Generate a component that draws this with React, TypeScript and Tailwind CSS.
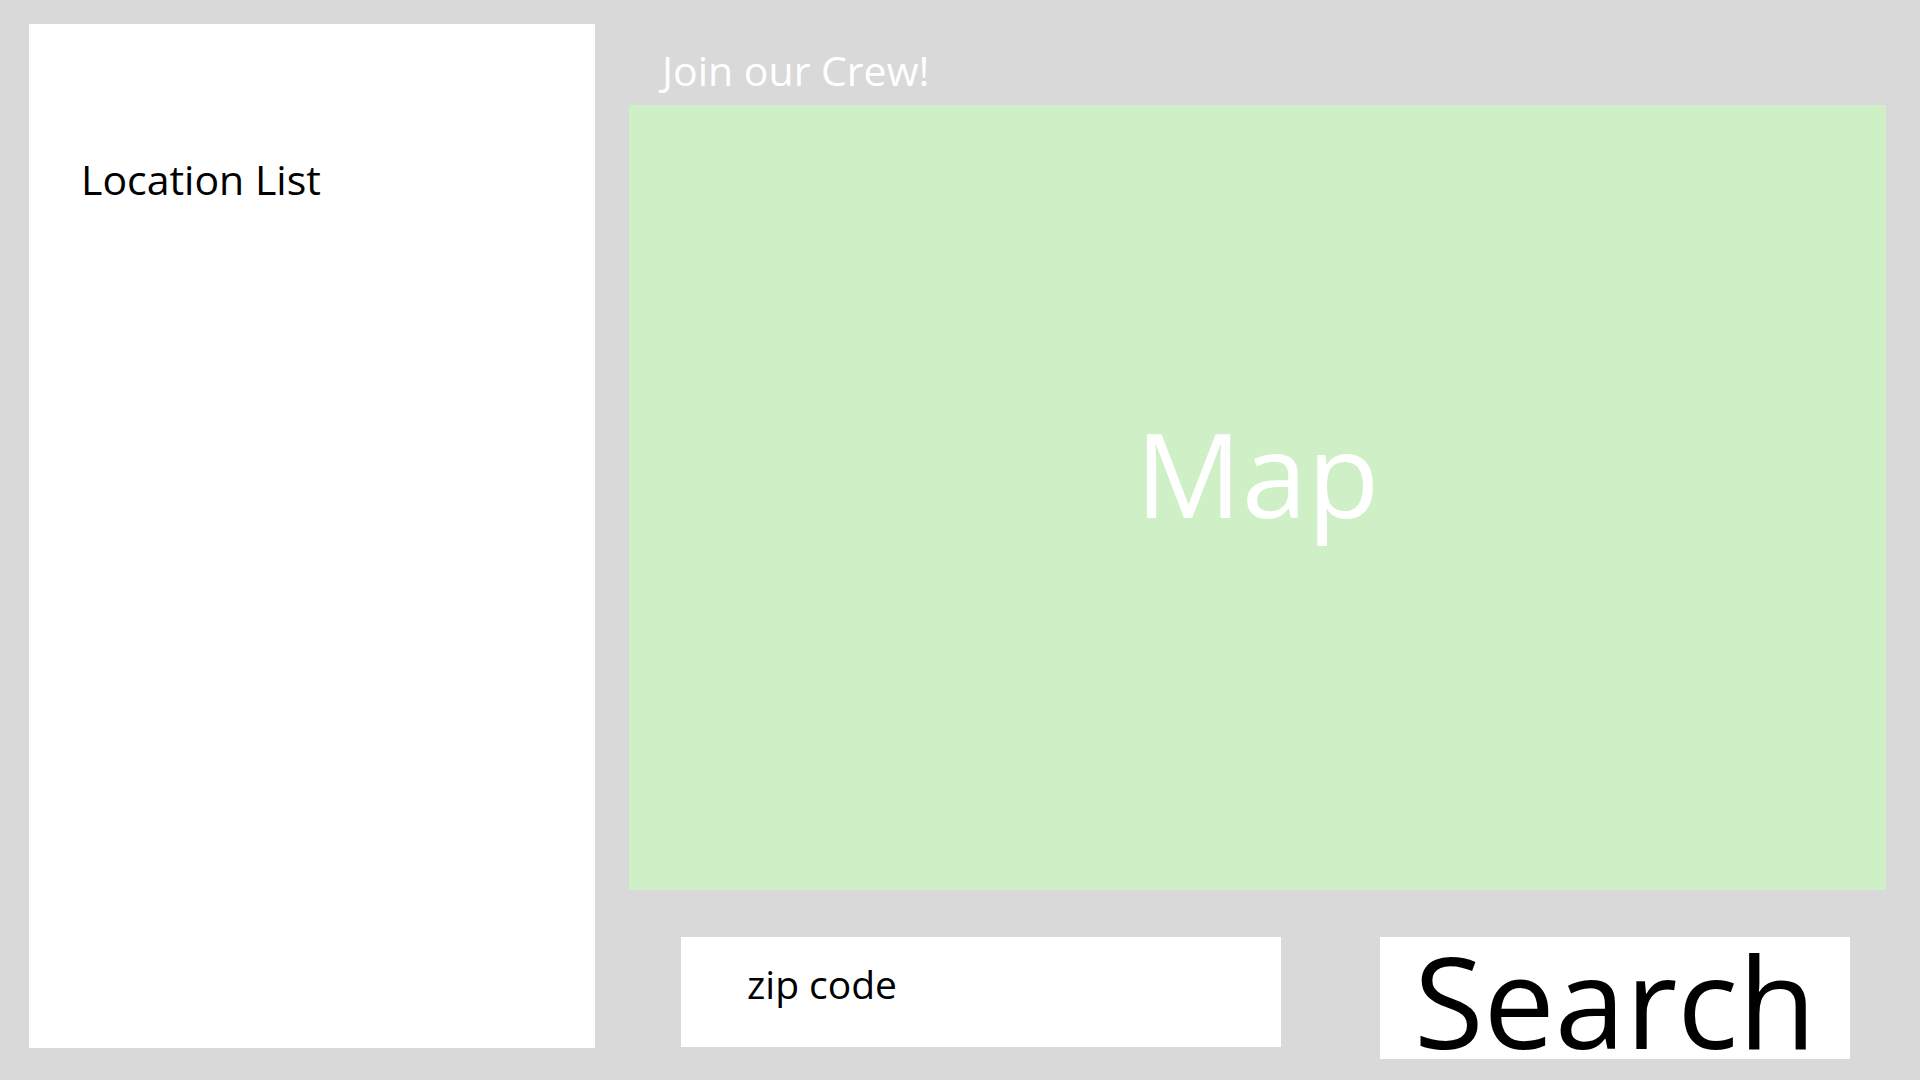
export default function App() {
  return (
    <main
      className="flex h-[1080px] w-[1920px] overflow-hidden bg-[#d9d9d9] pl-[29px] pt-[24px]"
      style={{ fontFamily: '"Open Sans", "Noto Sans", sans-serif' }}
    >
      <aside className="h-[1024px] w-[566px] shrink-0 bg-white pl-[52px] pt-[131px]">
        <h2 className="text-[41px] leading-[1.2] text-black">Location List</h2>
      </aside>

      <section className="ml-[34px] flex w-[1257px] shrink-0 flex-col">
        <header className="h-[81px] pl-[33px] pt-[22px]">
          <p className="text-[41px] leading-[1.2] text-white">Join our Crew!</p>
        </header>

        <div className="flex h-[785px] items-center justify-center bg-[#cfefc6] pb-[50px]">
          <span className="text-[118px] leading-none text-white">Map</span>
        </div>

        <div className="mt-[47px] flex items-start">
          <div className="ml-[52px] flex h-[110px] w-[600px] items-start bg-white pl-[66px] pt-[24px]">
            <span className="text-[39px] leading-[1.2] text-black">zip code</span>
          </div>
          <button
            type="button"
            className="ml-[99px] flex h-[122px] w-[470px] items-start justify-center bg-white pt-[6px]"
          >
            <span className="text-[127px] leading-[0.9] text-black">Search</span>
          </button>
        </div>
      </section>
    </main>
  );
}
